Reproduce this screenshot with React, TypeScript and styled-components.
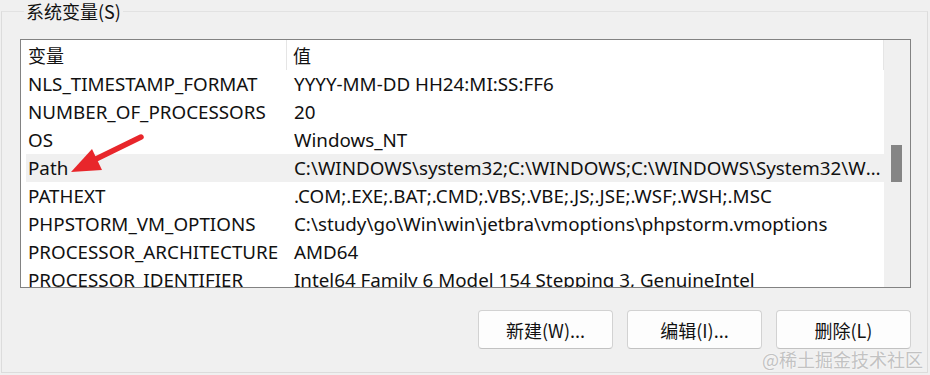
import React from "react";
import styled, { createGlobalStyle } from "styled-components";

const GlobalStyle = createGlobalStyle`
  html, body {
    margin: 0;
    padding: 0;
    background: #f0f0f0;
  }
  body {
    font-family: "Noto Sans", "Noto Sans CJK SC", sans-serif;
    color: #111;
  }
`;

const Page = styled.div`
  position: relative;
  width: 930px;
  height: 375px;
  overflow: hidden;
  background: #f0f0f0;
`;

const GroupBox = styled.fieldset`
  box-sizing: border-box;
  margin: 0 0 0 1px;
  width: 927px;
  height: 373px;
  padding: 17px 16px 0 18px;
  border: 1px solid #dcdcdc;
  border-top-color: #e2e2e2;
`;

const Legend = styled.legend`
  margin-left: 4px;
  padding: 0 2px;
  font-family: "Noto Sans CJK SC", sans-serif;
  font-size: 18px;
  line-height: 22px;
  color: #111;
`;

const ListBox = styled.div`
  box-sizing: border-box;
  display: flex;
  width: 891px;
  height: 249px;
  border: 1px solid #828282;
  background: #fff;
  overflow: hidden;
`;

const Table = styled.div`
  flex: 1;
  display: flex;
  flex-direction: column;
  min-width: 0;
`;

const HeaderRow = styled.div`
  display: flex;
  height: 30px;
  flex-shrink: 0;
  border-right: 1px solid #e5e5e5;
`;

const HeaderCell = styled.div<{ $w?: number }>`
  box-sizing: border-box;
  ${(p) => (p.$w ? `width: ${p.$w}px;` : "flex: 1;")}
  padding-left: ${(p) => (p.$w ? 7 : 6)}px;
  font-family: "Noto Sans CJK SC", sans-serif;
  font-size: 18px;
  line-height: 30px;
  border-right: ${(p) => (p.$w ? "1px solid #e5e5e5" : "none")};
`;

const Row = styled.div<{ $active?: boolean }>`
  display: flex;
  height: 28px;
  flex-shrink: 0;
  margin-left: 5px;
  background: ${(p) => (p.$active ? "#f0f0f0" : "transparent")};
`;

const NameCell = styled.div`
  box-sizing: border-box;
  width: 261px;
  padding-left: 2px;
  font-size: 18.8px;
  line-height: 28px;
  white-space: nowrap;
  overflow: hidden;
`;

const ValueCell = styled.div`
  flex: 1;
  min-width: 0;
  padding-left: 7px;
  padding-right: 1px;
  font-size: 18.8px;
  line-height: 28px;
  white-space: nowrap;
  overflow: hidden;
  text-overflow: ellipsis;
`;

const ScrollTrack = styled.div`
  width: 26px;
  flex-shrink: 0;
  background: #f0f0f0;
  padding-top: 105px;
  box-sizing: border-box;
`;

const Thumb = styled.div`
  width: 11px;
  height: 37px;
  margin-left: 7px;
  background: #858585;
`;

const ButtonRow = styled.div`
  display: flex;
  justify-content: flex-end;
  gap: 14px;
  width: 891px;
  margin-top: 22px;
`;

const Button = styled.button`
  box-sizing: border-box;
  width: 135px;
  height: 39px;
  background: #fdfdfd;
  border: 1px solid #d2d2d2;
  border-bottom-color: #c2c2c2;
  border-radius: 4px;
  font-family: "Noto Sans CJK SC", sans-serif;
  font-size: 18px;
  color: #111;
  padding: 0;
`;

const Watermark = styled.div`
  position: absolute;
  right: 7px;
  bottom: 4px;
  font-family: "Noto Sans CJK SC", sans-serif;
  font-size: 18px;
  line-height: 24px;
  color: #c2c2c2;
  text-shadow: 0 0 2px #fff;
  pointer-events: none;
`;

const ArrowLayer = styled.svg`
  position: absolute;
  left: 0;
  top: 0;
  pointer-events: none;
`;

const rows: [string, string][] = [
  ["NLS_TIMESTAMP_FORMAT", "YYYY-MM-DD HH24:MI:SS:FF6"],
  ["NUMBER_OF_PROCESSORS", "20"],
  ["OS", "Windows_NT"],
  [
    "Path",
    "C:\\WINDOWS\\system32;C:\\WINDOWS;C:\\WINDOWS\\System32\\Wbem;C:\\WINDOWS\\System32\\WindowsPowerShell\\v1.0\\",
  ],
  ["PATHEXT", ".COM;.EXE;.BAT;.CMD;.VBS;.VBE;.JS;.JSE;.WSF;.WSH;.MSC"],
  ["PHPSTORM_VM_OPTIONS", "C:\\study\\go\\Win\\win\\jetbra\\vmoptions\\phpstorm.vmoptions"],
  ["PROCESSOR_ARCHITECTURE", "AMD64"],
  ["PROCESSOR_IDENTIFIER", "Intel64 Family 6 Model 154 Stepping 3, GenuineIntel"],
];

export default function App() {
  return (
    <Page>
      <GlobalStyle />
      <GroupBox>
        <Legend>系统变量(S)</Legend>
        <ListBox>
          <Table>
            <HeaderRow>
              <HeaderCell $w={266}>变量</HeaderCell>
              <HeaderCell>值</HeaderCell>
            </HeaderRow>
            {rows.map(([name, value]) => (
              <Row key={name} $active={name === "Path"}>
                <NameCell>{name}</NameCell>
                <ValueCell>{value}</ValueCell>
              </Row>
            ))}
          </Table>
          <ScrollTrack>
            <Thumb />
          </ScrollTrack>
        </ListBox>
        <ButtonRow>
          <Button>新建(W)...</Button>
          <Button>编辑(I)...</Button>
          <Button>删除(L)</Button>
        </ButtonRow>
      </GroupBox>
      <ArrowLayer width="930" height="375" viewBox="0 0 930 375">
        <line x1="141" y1="137" x2="96" y2="159" stroke="#e8262b" strokeWidth="5.5" strokeLinecap="round" />
        <polygon points="71,172 92,149 102,170" fill="#e8262b" />
      </ArrowLayer>
      <Watermark>@稀土掘金技术社区</Watermark>
    </Page>
  );
}
